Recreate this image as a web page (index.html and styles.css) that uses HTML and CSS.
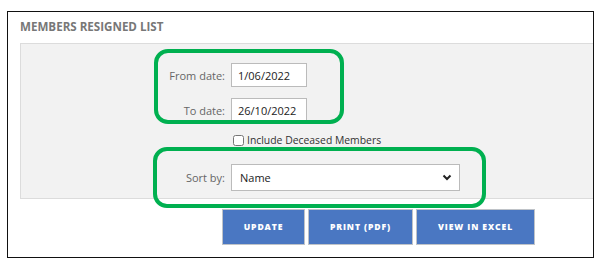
FILE: index.html
```html
<!DOCTYPE html>
<html lang="en">
<head>
    <meta charset="UTF-8">
    <title>Members Resigned List</title>
    <link rel="stylesheet" href="styles.css">
</head>
<body>
    <div class="frame">
        <h2 class="title">MEMBERS RESIGNED LIST</h2>

        <div class="panel">
            <div class="row">
                <label for="fromDate">From date:</label>
                <input type="text" id="fromDate" class="date" value="1/06/2022">
            </div>
            <div class="row">
                <label for="toDate">To date:</label>
                <input type="text" id="toDate" class="date" value="26/10/2022">
            </div>
            <div class="row check-row">
                <span></span>
                <label class="check"><input type="checkbox"> Include Deceased Members</label>
            </div>
            <div class="row sort-row">
                <label for="sortBy">Sort by:</label>
                <div class="select-wrap">
                    <select id="sortBy">
                        <option>Name</option>
                        <option>Date</option>
                    </select>
                    <svg class="chevron" width="10" height="7" viewBox="0 0 10 7"><path d="M1.5 1.5 L5 5 L8.5 1.5" fill="none" stroke="#222" stroke-width="2"/></svg>
                </div>
            </div>
        </div>

        <div class="actions">
            <button class="btn btn-update">UPDATE</button>
            <button class="btn btn-print">PRINT (PDF)</button>
            <button class="btn btn-excel">VIEW IN EXCEL</button>
        </div>

        <!-- highlight marks -->
        <div class="mark mark-dates"></div>
        <div class="mark mark-sort"></div>
    </div>
</body>
</html>
```

FILE: styles.css
```css
body {
    margin: 0;
    background: #fff;
    font-family: "Open Sans", Arial, sans-serif;
}

.frame {
    position: relative;
    box-sizing: border-box;
    margin: 11px 0 0 7px;
    width: 587px;
    height: 247px;
    border: 1px solid #111;
}

.title {
    margin: 0;
    height: 31px;
    line-height: 29px;
    padding-left: 12px;
    font-size: 11.6px;
    font-weight: 700;
    color: #777;
}

.panel {
    margin-left: 12px;
    box-sizing: border-box;
    height: 156px;
    padding-top: 19px;
    background: #f2f2f2;
    border-top: 1px solid #dcdcdc;
    border-left: 1px solid #dcdcdc;
    border-bottom: 1px solid #dcdcdc;
}

.row {
    display: grid;
    grid-template-columns: 204px auto;
    column-gap: 6px;
    align-items: center;
    margin-bottom: 11px;
}

.row > label {
    text-align: right;
    font-size: 11px;
    color: #666;
}

.date {
    box-sizing: border-box;
    width: 76px;
    height: 24px;
    padding: 0 6px;
    border: 1px solid #bbb;
    background: #fff;
    font-family: inherit;
    font-size: 11px;
    color: #222;
    outline: none;
}

.check-row {
    margin-bottom: 0;
    height: 12px;
    column-gap: 8px;
}

.row > .check {
    display: flex;
    align-items: center;
    text-align: left;
    font-size: 10.4px;
    color: #333;
}

.check input {
    margin: 0 3px 0 0;
    width: 11px;
    height: 11px;
}

.sort-row {
    margin-top: 19px;
    margin-bottom: 0;
}

.select-wrap {
    position: relative;
    width: 229px;
}

.select-wrap select {
    appearance: none;
    box-sizing: border-box;
    width: 229px;
    height: 27px;
    padding: 0 8px;
    border: 1px solid #bbb;
    background: #fff;
    font-family: inherit;
    font-size: 11px;
    color: #222;
}

.chevron {
    position: absolute;
    right: 8px;
    top: 10px;
}

.actions {
    display: flex;
    gap: 3px;
    margin: 10px 0 0 214px;
}

.btn {
    box-sizing: border-box;
    height: 36px;
    border: 1px solid #bfc3c8;
    background: #4a77c2;
    color: #fff;
    font-family: inherit;
    font-size: 8.6px;
    font-weight: 800;
    letter-spacing: 0.9px;
    cursor: pointer;
}

.btn-update { width: 83px; }
.btn-print { width: 105px; }
.btn-excel { width: 119px; }

.mark {
    position: absolute;
    box-sizing: border-box;
    border: 4px solid #00b050;
    border-radius: 14px;
}

.mark-dates {
    left: 146px;
    top: 37px;
    width: 190px;
    height: 75px;
}

.mark-sort {
    left: 145px;
    top: 135px;
    width: 333px;
    height: 61px;
}
```
